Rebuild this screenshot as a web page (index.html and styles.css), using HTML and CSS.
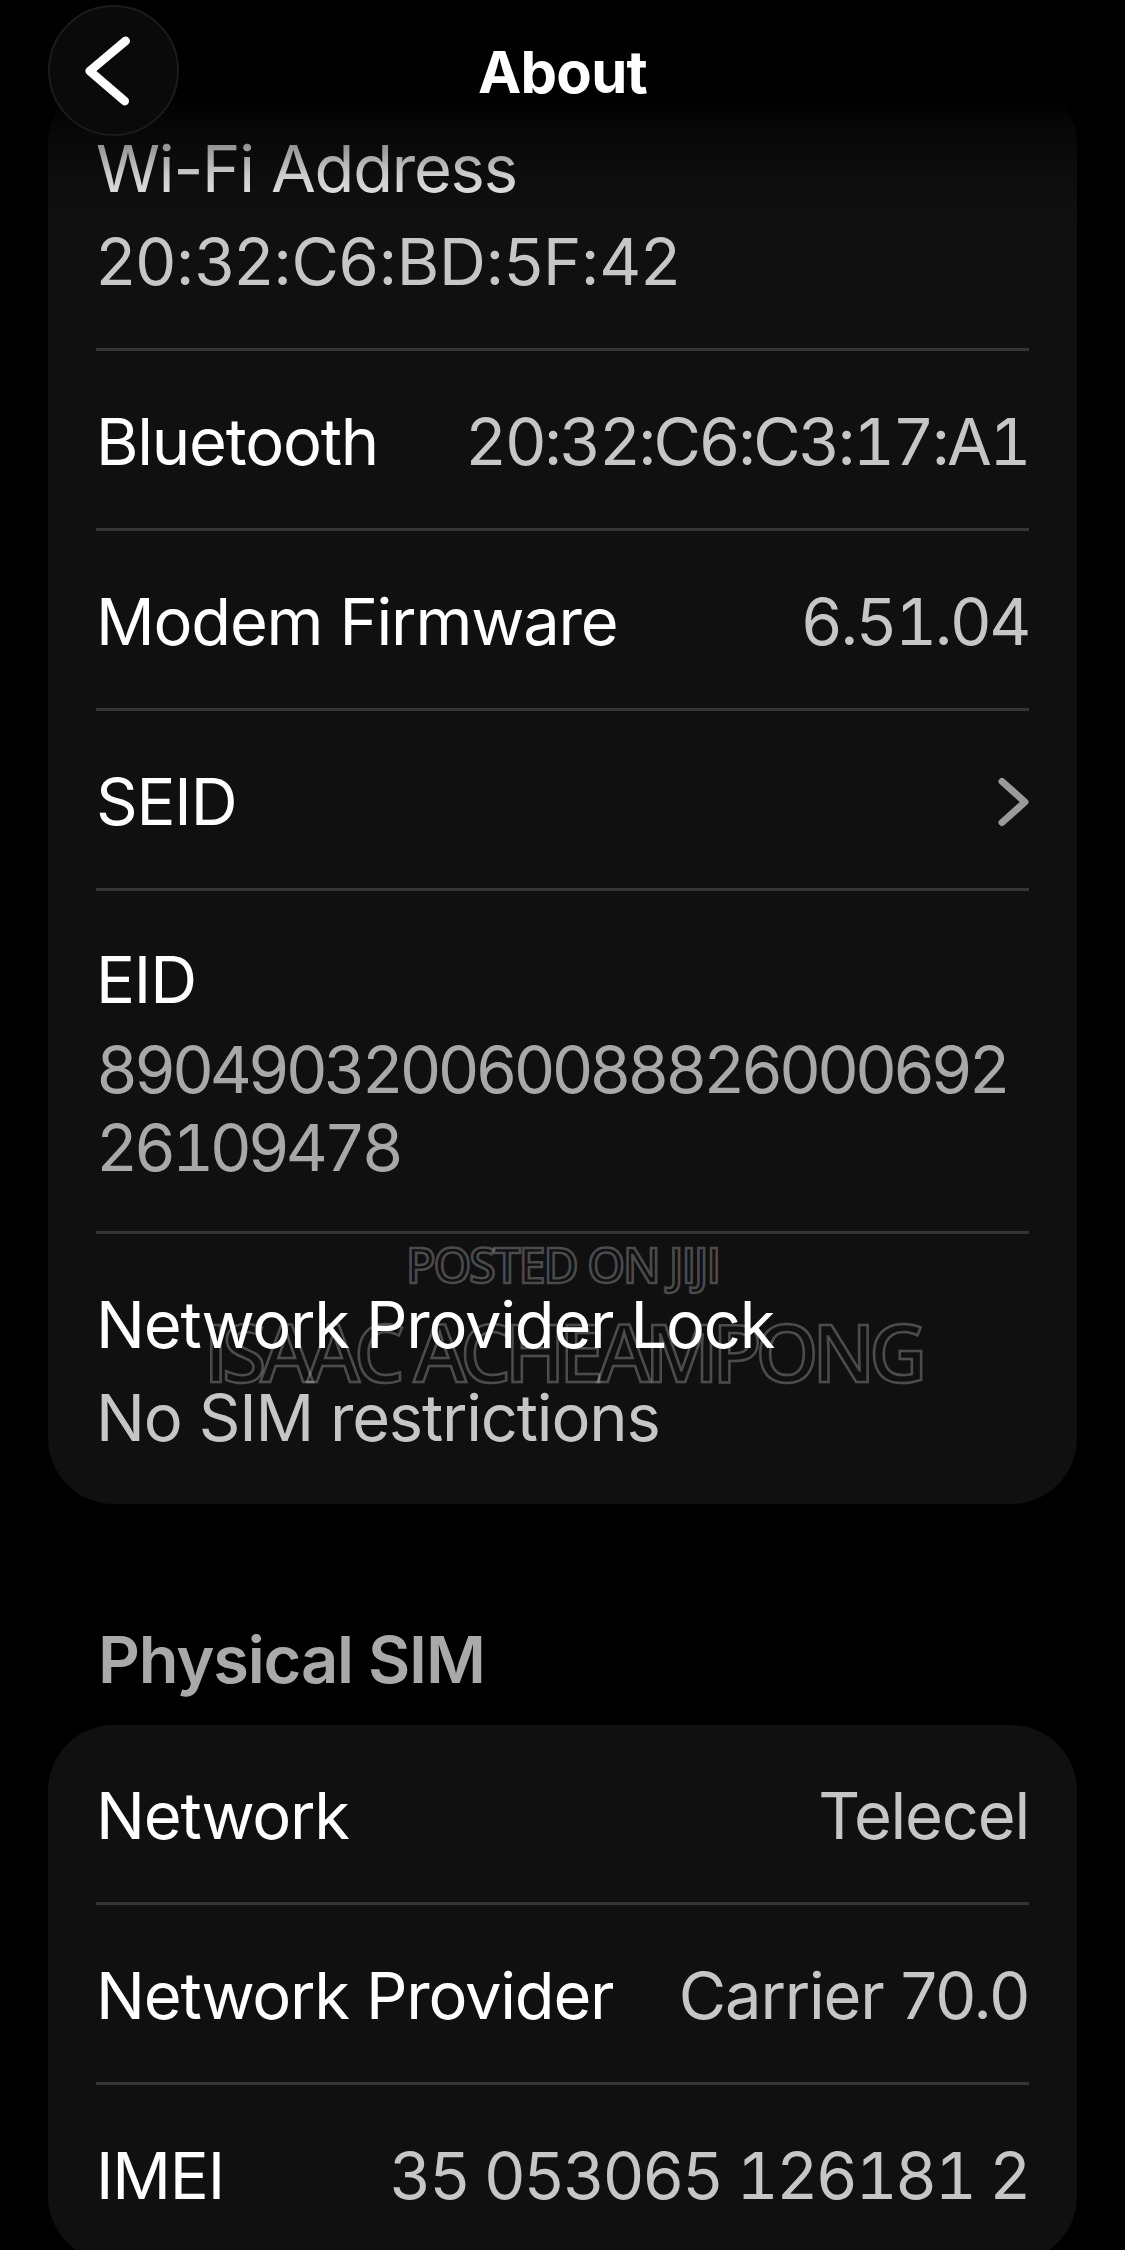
FILE: index.html
```html
<!DOCTYPE html>
<html lang="en">
<head>
  <meta charset="UTF-8" />
  <title>About</title>
  <link rel="stylesheet" href="styles.css">
</head>
<body>
  <div class="topbar">
    <button class="back" aria-label="Back">
      <svg width="131" height="131" viewBox="0 0 131 131">
        <polyline points="78,35 41,66 77,97" fill="none" stroke="#fff" stroke-width="9" stroke-linecap="round" stroke-linejoin="round" />
      </svg>
    </button>
    <h1>About</h1>
  </div>

  <main class="page">
    <section class="group">
      <div class="row stacked">
        <div class="label">Wi-Fi Address</div>
        <div class="value mac">20:32:C6:BD:5F:42</div>
      </div>
      <div class="row">
        <span class="label">Bluetooth</span>
        <span class="value num">20:32:C6:C3:17:A1</span>
      </div>
      <div class="row">
        <span class="label">Modem Firmware</span>
        <span class="value num">6.51.04</span>
      </div>
      <div class="row">
        <span class="label">SEID</span>
        <svg class="chevron" width="32" height="50" viewBox="0 0 32 50">
          <polyline points="5,4.5 28,25 5,45.5" fill="none" stroke="#9a9a9a" stroke-width="7" stroke-linecap="round" stroke-linejoin="round" />
        </svg>
      </div>
      <div class="row stacked tight">
        <div class="label">EID</div>
        <div class="value value-dim eid">890490320060088826000692<br>26109478</div>
      </div>
      <div class="row stacked">
        <div class="label">Network Provider Lock</div>
        <div class="value">No SIM restrictions</div>
      </div>
    </section>

    <h2 class="group-title">Physical SIM</h2>
    <section class="group">
      <div class="row">
        <span class="label">Network</span>
        <span class="value">Telecel</span>
      </div>
      <div class="row">
        <span class="label">Network Provider</span>
        <span class="value">Carrier 70.0</span>
      </div>
      <div class="row">
        <span class="label">IMEI</span>
        <span class="value num">35 053065 126181 2</span>
      </div>
    </section>

    <!-- marca de agua de la foto -->
    <div class="watermark">
      <span class="wm-small">POSTED ON JIJI</span>
      <span class="wm-big">ISAAC ACHEAMPONG</span>
    </div>
  </main>
</body>
</html>
```

FILE: styles.css
```css
body {
  margin: 0;
  background-color: #000;
  color: #fff;
  font-family: Inter, "Noto Sans", sans-serif;
}
.topbar {
  position: absolute;
  top: 0;
  left: 0;
  right: 0;
  height: 240px;
  z-index: 2;
  display: grid;
  grid-template-columns: 131px 1fr 131px;
  align-items: start;
  padding: 5px 48px 0 48px;
  box-sizing: border-box;
  background: linear-gradient(#000 0, #000 95px, rgba(0,0,0,0.55) 130px, rgba(0,0,0,0.2) 175px, rgba(0,0,0,0) 235px);
}
.back {
  width: 131px;
  height: 131px;
  padding: 0;
  border-radius: 50%;
  border: 2px solid #1b1b1b;
  background-color: #0a0a0a;
  display: flex;
  align-items: center;
  justify-content: center;
}
.back svg {
  display: block;
}
.topbar h1 {
  margin: 38px 0 0 0;
  text-align: center;
  font-size: 58px;
  line-height: 1;
  font-weight: 700;
  letter-spacing: -0.8px;
}
.page {
  position: relative;
  padding: 78px 48px 0 48px;
}
.group {
  background-color: #101010;
  border-radius: 66px;
  padding: 0 48px;
  font-size: 65px;
  letter-spacing: -1.2px;
  line-height: 78px;
}
.row {
  display: flex;
  justify-content: space-between;
  align-items: center;
  padding: 52px 0 47px 0;
}
.row:not(:last-child) {
  border-bottom: 3px solid #353535;
}
.row.stacked {
  display: block;
}
.row.stacked .value {
  margin-top: 15px;
}
.row.tight {
  padding: 50px 0 44px 0;
}
.row.tight .value {
  margin-top: 12px;
}
.label {
  color: #fff;
}
.value {
  color: #c6c6c6;
}
.mac {
  letter-spacing: -0.4px;
}
.num {
  font-variant-numeric: tabular-nums;
  letter-spacing: -2.5px;
}
.value-dim {
  color: #a8a8a8;
}
.eid {
  font-variant-numeric: tabular-nums;
  letter-spacing: -4.2px;
}
.chevron {
  display: block;
}
.group-title {
  margin: 117px 0 26px 0;
  padding-left: 50px;
  font-size: 65px;
  line-height: 78px;
  font-weight: 600;
  letter-spacing: -1.2px;
  color: #a9a9a9;
}
.watermark {
  position: absolute;
  top: 1241px;
  left: 0;
  right: 0;
  display: flex;
  flex-direction: column;
  align-items: center;
  gap: 22px;
  font-family: "Open Sans", sans-serif;
  font-weight: 600;
  line-height: 1;
  color: transparent;
  -webkit-text-stroke: 2.5px rgba(255,255,255,0.25);
  pointer-events: none;
}
.wm-small {
  font-size: 48px;
  letter-spacing: -2px;
}
.wm-big {
  font-size: 80px;
  letter-spacing: -6px;
}
```
